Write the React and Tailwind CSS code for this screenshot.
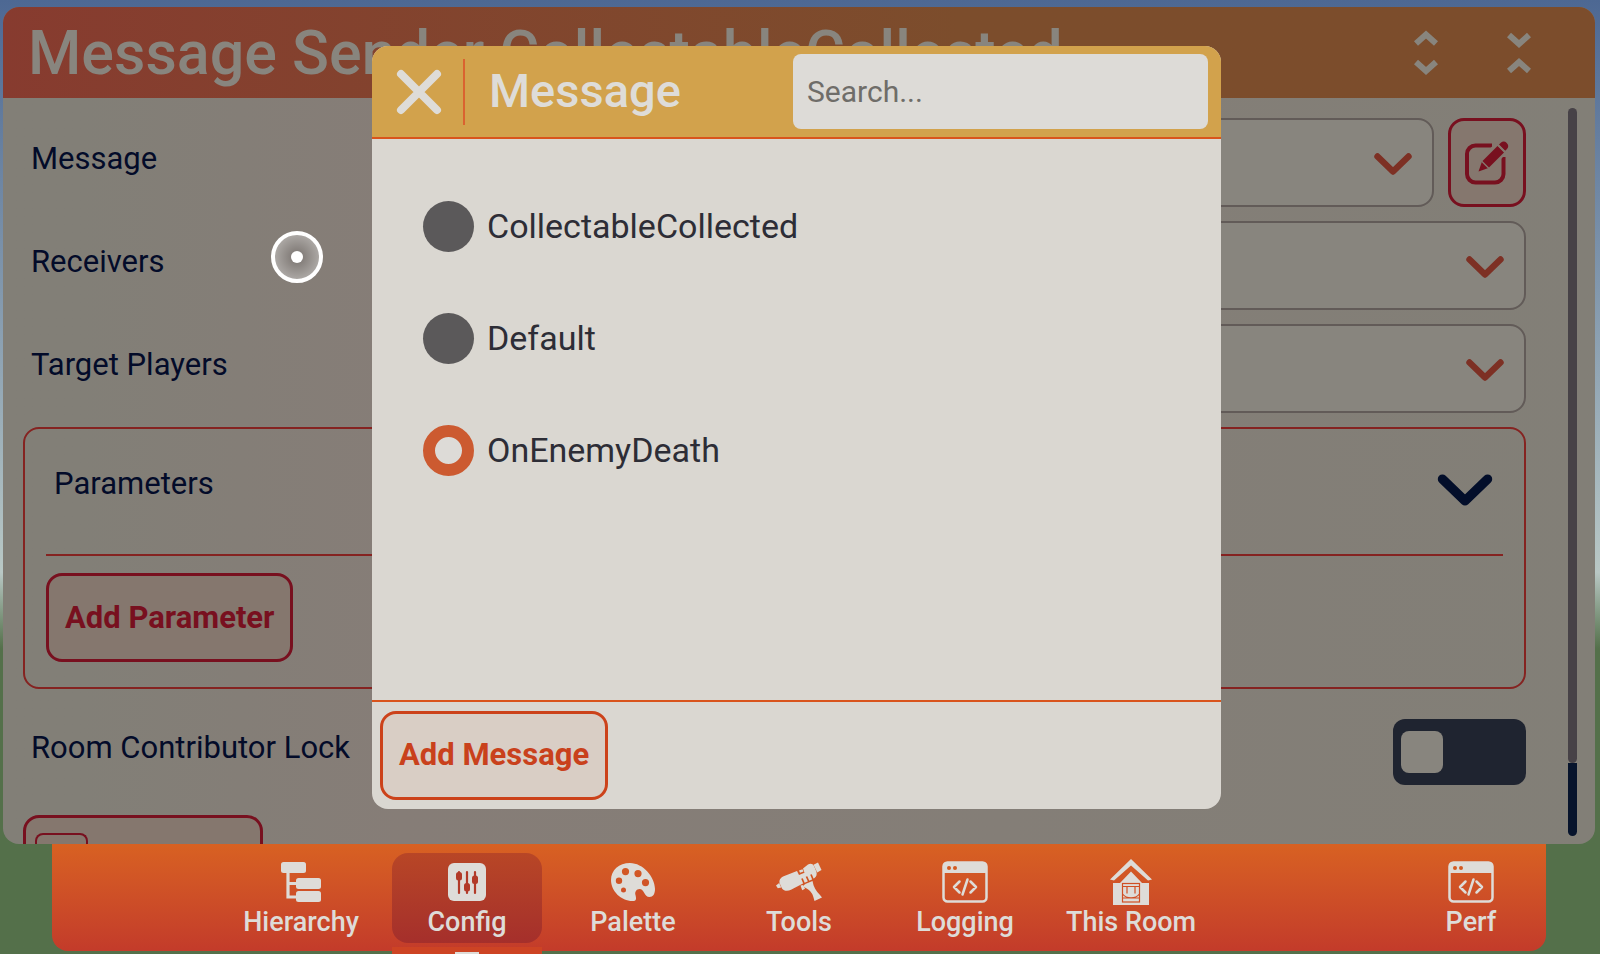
import React, { useState } from "react";

const MESSAGES = ["CollectableCollected", "Default", "OnEnemyDeath"];

function Chevron({ className }) {
  return (
    <svg viewBox="0 0 38 22" fill="none" stroke="currentColor" strokeWidth="6.400" strokeLinecap="round" strokeLinejoin="round" className={className} aria-hidden="true">
      <path d="M3.500 3.500 19 18.500 34.500 3.500" />
    </svg>
  );
}

function SmallChevrons({ top, bottom }) {
  return (
    <svg viewBox="0 0 24 46" fill="none" stroke="currentColor" strokeWidth="6" className="h-[46px] w-6" aria-hidden="true">
      <path d={top} />
      <path d={bottom} />
    </svg>
  );
}

function EditIcon() {
  return (
    <svg viewBox="0 0 46 46" className="size-[46px]" fill="none" aria-hidden="true">
      <path d="M28 5.500H11.500a8.500 8.500 0 0 0-8.500 8.500V34a8.500 8.500 0 0 0 8.500 8.500H31a8.500 8.500 0 0 0 8.500-8.500V17" stroke="currentColor" strokeWidth="4" />
      <path d="M24.500 10 32 2.500H42V14L35 21Z" fill="#85776e" />
      <path d="m14.500 31.500 3.500-10L33.500 6l6.500 6.500L24.500 28Z" fill="currentColor" />
      <path d="m35 4.500 1.800-1.800a4.400 4.400 0 0 1 6.200 6.200L41.200 10.700Z" fill="currentColor" />
      <path d="m17.500 21 7.500 7.500M33.500 4.500 41.500 12.500" stroke="#85776e" strokeWidth="1.400" />
    </svg>
  );
}

function HierarchyIcon() {
  return (
    <svg viewBox="0 0 40 40" className="size-10" aria-hidden="true">
      <path d="M7 11v24h10M7 21.500h10" fill="none" stroke="currentColor" strokeWidth="3.200" />
      <rect x="0" y="0" width="25" height="11" rx="2.500" fill="currentColor" />
      <rect x="15" y="16" width="25" height="11" rx="2.500" fill="currentColor" />
      <rect x="15" y="29" width="25" height="11" rx="2.500" fill="currentColor" />
    </svg>
  );
}

function ConfigIcon() {
  return (
    <svg viewBox="0 0 40 40" className="size-10" aria-hidden="true">
      <rect x="1" y="1" width="38" height="38" rx="6" fill="currentColor" />
      <g stroke="#b23a28" strokeWidth="2.200" strokeLinecap="round">
        <path d="M12 10v21M20 10v21M28 10v21" />
      </g>
      <g fill="#b23a28">
        <rect x="9" y="10" width="6" height="8.500" rx="2.500" />
        <rect x="17" y="21" width="6" height="8.500" rx="2.500" />
        <rect x="25" y="13.500" width="6" height="8.500" rx="2.500" />
      </g>
    </svg>
  );
}

function PaletteIcon() {
  return (
    <svg viewBox="0 0 44 40" className="h-10 w-11" aria-hidden="true">
      <path
        fill="currentColor"
        fillRule="evenodd"
        d="M19 1C32 1 44 15 44 27c0 5-2 8-5.500 8-5.500 0-5-8-10-8-3 0-5 3-4 6 1 4 1 6-3 6C10 39 0 29 0 18 0 8 8 1 19 1ZM14.500 6a3.600 3.600 0 1 0 0 7.200 3.600 3.600 0 0 0 0-7.200ZM27 8a3.600 3.600 0 1 0 0 7.200A3.600 3.600 0 0 0 27 8ZM8 15.500a3.200 3.200 0 1 0 0 6.400 3.200 3.200 0 0 0 0-6.400ZM34.500 17a3.600 3.600 0 1 0 0 7.200 3.600 3.600 0 0 0 0-7.200ZM12.500 25.500a2.500 2.500 0 1 0 0 5 2.500 2.500 0 0 0 0-5Z"
      />
    </svg>
  );
}

function ToolsIcon() {
  return (
    <svg viewBox="0 0 46 40" className="h-10 w-[46px]" aria-hidden="true">
      <g fill="currentColor">
        <path d="M0 23.500 3.200 21l2 4.500-3.400.8Z" />
        <path d="M3.500 21c-.6-3 .8-5 3.500-6.500L21 9l2 4 5.500-2.200L27 6.500l5-4c2.500-1.400 4.800-.8 6 1.600l2.300 5.400c.9 2.500.3 5-1.800 6.500l-2.500 1.600L27 21.500l-12 6.300c-3 1.500-7 1.500-9-1.300Z" />
        <path d="m23 8.500 3.500-1.300 1 2.300-3.500 1.300Z" />
        <path d="M37.500 2.800 42 .5 45.500 8l-4.300 2.500Z" />
        <path d="m28 22.500 8.500-3.500c1 6 3.500 10 7.500 14l2 2.500-7.500 3.500-1-3.500c-1-5-4.500-8-9.500-10.500Z" />
        <path d="m24.500 23.500 2.800-.5 1.700 3.800-2.800 1.500Z" />
      </g>
      <path d="m26 16.500 2.500 6M30.500 14.500 33 20M35 12.500l2.500 6" stroke="#d0521f" strokeWidth="1.700" />
    </svg>
  );
}

function CodeWindowIcon() {
  return (
    <svg viewBox="0 0 46 42" className="h-[42px] w-[46px]" fill="none" aria-hidden="true">
      <rect x="1.500" y="1.500" width="43" height="39" rx="4" stroke="currentColor" strokeWidth="2.500" />
      <path d="M1 12V5a4 4 0 0 1 4-4h36a4 4 0 0 1 4 4v7Z" fill="currentColor" />
      <circle cx="7" cy="7" r="2" fill="#d45a22" />
      <circle cx="13" cy="7" r="2" fill="#d45a22" />
      <path d="m17.500 20.500-5.500 5.500 5.500 5.500M28.500 20.500l5.500 5.500-5.500 5.500M25.500 18.500l-5 15" stroke="currentColor" strokeWidth="2.500" strokeLinecap="round" strokeLinejoin="round" />
    </svg>
  );
}

function RoomIcon() {
  return (
    <svg viewBox="0 0 42 46" className="h-[46px] w-[42px]" aria-hidden="true">
      <path d="M21 0 42 20.500 38 21.500 21 6.500 4 21.500 0 20.500Z" fill="currentColor" />
      <path d="m21 12.500 11 11.500h7V46H3V24h7Z" fill="currentColor" />
      <g fill="none" stroke="#d04f24" strokeWidth="1.200">
        <rect x="12.500" y="24.500" width="17" height="18.500" />
        <path d="M12.500 27.500h17M17 27.500v7M25 27.500v7M12.500 35c4 5 13 5 17 0M12.500 39h17" />
      </g>
    </svg>
  );
}

function FieldRow({ id, label, value, children }) {
  return (
    <div className="flex items-center gap-[14px]">
      <label htmlFor={id} className="w-[600px] pb-2 pl-2">
        {label}
      </label>
      <div className="relative flex-1">
        <select id={id} className="h-[89px] w-full appearance-none rounded-2xl border-2 border-[#625b58] bg-[#88857e] px-5">
          <option>{value}</option>
        </select>
        <Chevron className="pointer-events-none absolute right-[22px] top-[35px] h-[22px] w-[38px] text-[#7d3024]" />
      </div>
      {children}
    </div>
  );
}

function NavItem({ label, icon, active }) {
  return (
    <button
      className={
        active
          ? "flex h-[90px] w-[150px] flex-col items-center rounded-2xl bg-linear-to-b from-[#b84626] to-[#a52f2b]"
          : "flex h-[90px] w-[150px] flex-col items-center"
      }
    >
      <span className="flex h-[57px] items-center">{icon}</span>
      <span className="whitespace-nowrap text-[27px] leading-6 font-medium">{label}</span>
    </button>
  );
}

function ConfigPanel() {
  return (
    <section className="mt-[7px] mr-[5px] ml-[3px] flex min-h-0 flex-1 flex-col overflow-hidden rounded-2xl bg-linear-to-r from-[#827f77] from-5% via-[#867d77] via-25% to-[#827f77]">
      <header className="flex h-[91px] shrink-0 items-center bg-linear-to-r from-[#873b2f] to-[#7c4d2c] to-60% pr-[64px] pl-[25px] text-[#88857e]">
        <h1 className="flex-1 whitespace-nowrap text-[61px] leading-[70px] font-medium">Message Sender CollectableCollected</h1>
        <button aria-label="Expand all" className="mr-[69px]">
          <SmallChevrons top="M2 13.500 12 4.500 22 13.500" bottom="M2 32 12 41 22 32" />
        </button>
        <button aria-label="Collapse all">
          <SmallChevrons top="M2 5 12 14 22 5" bottom="M2 41 12 32 22 41" />
        </button>
      </header>

      <div className="flex min-h-0 flex-1 overflow-hidden pr-[18px] pl-5 text-[31px] leading-9 text-[#030b29]">
        <div className="flex min-w-0 flex-1 flex-col gap-[14px] pt-5">
          <FieldRow id="message" label="Message" value="OnEnemyDeath">
            <button aria-label="Edit message" className="flex h-[89px] w-[78px] items-center justify-center rounded-2xl border-[3px] border-[#78101f] bg-[#85776e] text-[#78101f]">
              <EditIcon />
            </button>
          </FieldRow>
          <FieldRow id="receivers" label="Receivers" value="Everyone" />
          <FieldRow id="players" label="Target Players" value="All" />

          <section className="rounded-2xl border-2 border-[#852321] px-[21px] pb-[25px]">
            <div className="flex h-[127px] items-center justify-between border-b-2 border-[#852321] pr-[10px] pl-2">
              <h2 className="pb-4">Parameters</h2>
              <button aria-label="Collapse parameters" className="pb-1">
                <Chevron className="h-8 w-14 text-[#030e2a]" />
              </button>
            </div>
            <button className="mt-[17px] h-[89px] rounded-2xl border-[3px] border-[#78101f] bg-[#85776e] px-4 font-bold whitespace-nowrap text-[#78101f]">
              Add Parameter
            </button>
          </section>

          <div className="mt-4 flex items-center justify-between">
            <label htmlFor="lock" className="pb-2 pl-2">
              Room Contributor Lock
            </label>
            <span className="relative flex">
              <input id="lock" type="checkbox" className="peer h-[66px] w-[133px] appearance-none rounded-xl bg-[#1f2430]" />
              <span className="pointer-events-none absolute top-3 left-2 size-[42px] rounded-lg bg-[#88857e] peer-checked:left-[83px]" />
            </span>
          </div>

          <button aria-label="More options" className="mt-4 h-[89px] w-60 shrink-0 rounded-2xl border-[3px] border-[#78101f] bg-[#85776e] px-[9px] pt-[15px]">
            <span className="block h-full w-[53px] rounded-t-lg border-2 border-b-0 border-[#78101f]" />
          </button>
        </div>

        <div className="ml-[42px] flex w-[9px] flex-col pt-[10px] pb-2" aria-hidden="true">
          <div className="flex-1 rounded-full bg-[#474247]" />
          <div className="h-[73px] rounded-b-full bg-[#07142c]" />
        </div>
      </div>
    </section>
  );
}

function NavBar() {
  return (
    <nav className="relative mr-[54px] mb-[3px] ml-[52px] flex h-[107px] shrink-0 items-start justify-between rounded-b-2xl bg-linear-to-b from-[#d86122] to-[#c33b2a] pt-[9px] pl-[174px] text-[#dedcd8]">
      <div className="flex gap-4">
        <NavItem label="Hierarchy" icon={<HierarchyIcon />} />
        <NavItem label="Config" icon={<ConfigIcon />} active />
        <NavItem label="Palette" icon={<PaletteIcon />} />
        <NavItem label="Tools" icon={<ToolsIcon />} />
        <NavItem label="Logging" icon={<CodeWindowIcon />} />
        <NavItem label="This Room" icon={<RoomIcon />} />
      </div>
      <NavItem label="Perf" icon={<CodeWindowIcon />} />
      <div className="absolute -bottom-[3px] left-[340px] flex h-[7px] w-[150px] items-end justify-center bg-[#cd4424]">
        <div className="h-[2px] w-6 bg-[#dedcd8]" />
      </div>
    </nav>
  );
}

function MessageDialog({ selected, onSelect }) {
  return (
    <div className="absolute inset-0 flex justify-center pt-[46px] pr-[7px] pb-[145px]">
      <div role="dialog" aria-labelledby="dialog-title" className="flex w-[849px] max-w-full flex-col overflow-hidden rounded-2xl bg-[#dad7d1]">
        <header className="flex h-[93px] shrink-0 items-center border-b-2 border-[#d9541c] bg-[#d2a24c] pr-[13px] pl-6">
          <button aria-label="Close">
            <svg viewBox="0 0 46 46" className="size-[46px]" fill="none" stroke="#dedcd8" strokeWidth="8" strokeLinecap="round" aria-hidden="true">
              <path d="M5 5 41 41M41 5 5 41" />
            </svg>
          </button>
          <div className="ml-[21px] h-[66px] w-[2px] bg-[#da6230]" />
          <h2 id="dialog-title" className="flex-1 pb-[2px] pl-6 text-[47px] leading-[54px] font-medium text-[#dedcd8]">
            Message
          </h2>
          <input
            type="text"
            aria-label="Search messages"
            placeholder="Search..."
            className="h-[75px] w-[415px] rounded-lg bg-[#dddbd7] px-[14px] text-[30px] text-[#333] placeholder:text-[#6f6d69]"
          />
        </header>

        <fieldset className="flex flex-1 flex-col gap-[61px] pt-[62px] pl-[51px]">
          {MESSAGES.map((name) => (
            <label key={name} className="flex items-center gap-[13px] text-[34px] leading-[51px] text-[#2d2d36]">
              <input
                type="radio"
                name="message"
                checked={selected === name}
                onChange={() => onSelect(name)}
                className="size-[51px] appearance-none rounded-full bg-[#5b595a] checked:border-[12px] checked:border-[#cc5a30] checked:bg-[#dddbd7]"
              />
              {name}
            </label>
          ))}
        </fieldset>

        <footer className="flex h-[109px] shrink-0 items-start border-t-2 border-[#d9541c] px-2 pt-[9px]">
          <button className="h-[89px] rounded-2xl border-[3px] border-[#cc421a] bg-[#d9cec5] px-4 text-[31px] font-bold whitespace-nowrap text-[#c9411c]">
            Add Message
          </button>
        </footer>
      </div>
    </div>
  );
}

export default function App() {
  const [selected, setSelected] = useState("OnEnemyDeath");

  return (
    <div className="relative flex h-screen flex-col overflow-hidden bg-linear-to-b from-[#4d6893] via-[#b9c8c5] via-60% to-[#54704a] to-68% font-[Roboto,sans-serif]">
      <ConfigPanel />
      <NavBar />
      <MessageDialog selected={selected} onSelect={setSelected} />
      <div className="pointer-events-none absolute top-[231px] left-[271px] flex size-[52px] items-center justify-center rounded-full border-4 border-white bg-radial from-[#77716d] to-[#c2bfbc]">
        <div className="size-3 rounded-full bg-white" />
      </div>
    </div>
  );
}
